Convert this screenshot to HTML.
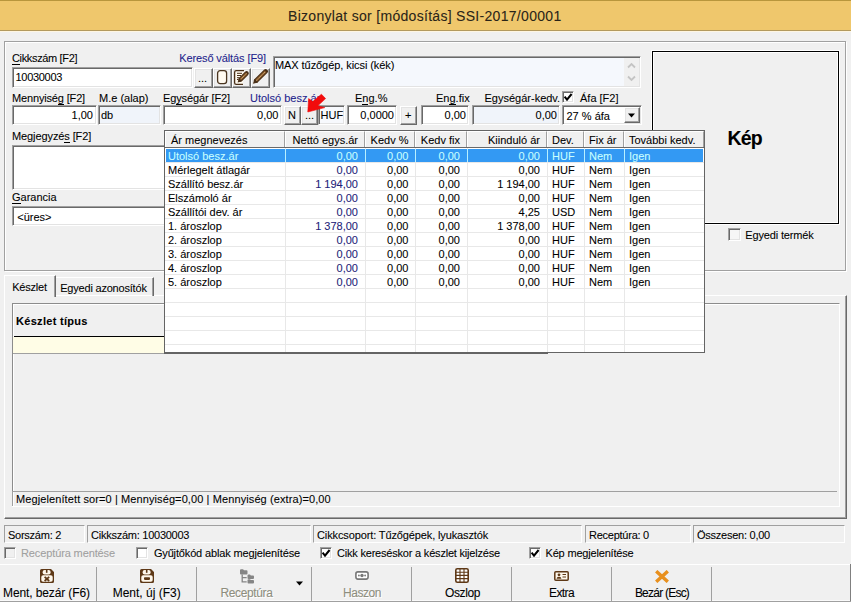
<!DOCTYPE html><html><head><meta charset="utf-8"><style>
*{margin:0;padding:0;box-sizing:border-box}
html,body{width:851px;height:602px;overflow:hidden;background:#f0f0f0;position:relative;font-family:"Liberation Sans",sans-serif}
.t{position:absolute;font:11px/13px "Liberation Sans",sans-serif;white-space:nowrap;color:#000;-webkit-text-stroke:0.08px currentColor}
.nv{color:#1e1e8c}
.b{position:absolute}
.sk{position:absolute;background:#fff;border:1px solid;border-color:#a0a0a0 #fff #fff #a0a0a0;box-shadow:inset 1px 1px 0 #696969,inset -1px -1px 0 #e3e3e3}
.rb{position:absolute;background:#f0f0f0;border:1px solid;border-color:#fff #696969 #696969 #fff;box-shadow:inset -1px -1px 0 #a0a0a0,inset 1px 1px 0 #e3e3e3}
.et{position:absolute;border:1px solid #a0a0a0;box-shadow:1px 1px 0 #fff,inset 1px 1px 0 #fff}
.cb{position:absolute;width:12px;height:12px;background:#fff;border:1px solid;border-color:#a0a0a0 #fff #fff #a0a0a0;box-shadow:inset 1px 1px 0 #696969,inset -1px -1px 0 #e3e3e3}
u{text-decoration:none;border-bottom:1px solid currentColor;display:inline-block;line-height:11px}
</style></head><body>
<div class="b" style="left:0;top:0;width:851px;height:31px;background:#efc76c;border-top:1px solid #b8963c;border-bottom:1px solid #b39a5e"></div>
<div class="b" style="left:0;top:31px;width:851px;height:1px;background:#fff6e2"></div>
<div class="t " style="top:6.65px;left:288px;font-size:14px;line-height:18px;color:#2a2418;letter-spacing:0.3px">Bizonylat sor [módosítás] SSI-2017/00001</div>
<div class="et" style="left:4px;top:41px;width:842px;height:230px;"></div>
<div class="t " style="top:51.69px;left:12px;letter-spacing:-0.35px"><u>C</u>ikkszám [F2]</div>
<div class="t nv" style="top:51.69px;right:585px;letter-spacing:-0.1px">Kereső váltás [F9]</div>
<div class="sk" style="left:12px;top:67px;width:181px;height:21px;"></div>
<div class="t " style="top:70.69px;left:15.5px;letter-spacing:-0.3px">10030003</div>
<div class="rb" style="left:194px;top:68px;width:19px;height:20px;"></div>
<div class="rb" style="left:213px;top:68px;width:19px;height:20px;"></div>
<div class="rb" style="left:232px;top:68px;width:19px;height:20px;"></div>
<div class="rb" style="left:251px;top:68px;width:19px;height:20px;"></div>
<div class="t " style="top:71.69px;left:198px;">...</div>
<svg class="b" style="left:213px;top:68px" width="19" height="20" viewBox="0 0 19 20">
<rect x="4.6" y="2.6" width="9" height="13" rx="2.6" fill="#fffaf0" stroke="#4a3520" stroke-width="1.3"/></svg>
<svg class="b" style="left:232px;top:68px" width="19" height="20" viewBox="0 0 19 20">
<path d="M12 2.6H4.2a1.6 1.6 0 0 0-1.6 1.6v10.6a1.6 1.6 0 0 0 1.6 1.6H11" fill="#fffaf0" stroke="#4a3018" stroke-width="1.3"/>
<path d="M5 5.3h5M5 7.5h4M5 9.7h2.5M5 11.5h1" stroke="#4a3018" stroke-width="1"/>
<path d="M8.6 11.4L14.6 5.4" stroke="#4a3018" stroke-width="4.4" stroke-linecap="round"/>
<path d="M8.6 11.4L14.6 5.4" stroke="#8a5a2a" stroke-width="2.2"/>
<path d="M8.8 11.2L14.4 5.6" stroke="#f0d8a8" stroke-width="0.9" stroke-dasharray="0.9 0.9"/>
<path d="M5.6 14.6L6.6 10.6L9.6 13.6z" fill="#4a3018"/></svg>
<svg class="b" style="left:251px;top:68px" width="19" height="20" viewBox="0 0 19 20">
<path d="M5.2 12.6L14.6 3.4" stroke="#4a3018" stroke-width="4.6" stroke-linecap="round"/>
<path d="M5.2 12.6L14.6 3.4" stroke="#8a5a2a" stroke-width="2.4"/>
<path d="M5.4 12.4L14.4 3.6" stroke="#f0d8a8" stroke-width="0.9" stroke-dasharray="0.9 0.9"/>
<path d="M2 15.8L3.4 11L7 14.4z" fill="#4a3018"/></svg>
<div class="sk" style="left:273px;top:56px;width:368px;height:32px;background:#f5f8fd"></div>
<div class="b" style="left:624px;top:58px;width:15px;height:28px;background:#f0f0f0"></div>
<svg class="b" style="left:624px;top:58px" width="15" height="28" viewBox="0 0 15 28">
<path d="M4 9.5l3.5-3.5L11 9.5M4 18.5l3.5 3.5L11 18.5" fill="none" stroke="#c4c4c4" stroke-width="1.8"/></svg>
<div class="t " style="top:59.19px;left:275px;letter-spacing:-0.07px">MAX tűzőgép, kicsi (kék)</div>
<div class="b" style="left:651px;top:50px;width:189px;height:175px;border:1px solid #fff"><div style="width:100%;height:100%;border:1px solid #000;box-shadow:inset 1px 1px 0 #fff,inset -1px -1px 0 #fff"></div></div>
<div class="t " style="top:127.24px;left:727.5px;font-size:19.5px;line-height:22px;letter-spacing:-0.9px"><b>Kép</b></div>
<div class="t " style="top:92.09px;left:12px;letter-spacing:-0.16px">Mennyisé<u>g</u> [F2]</div>
<div class="t " style="top:92.09px;left:99px;">M.e (alap)</div>
<div class="t " style="top:92.09px;left:163px;letter-spacing:-0.12px">Eg<u>y</u>ségár [F2]</div>
<div class="t nv" style="top:92.09px;left:250px;">Utolsó besz.ár</div>
<div class="t " style="top:92.09px;left:355px;">E<u>n</u>g.%</div>
<div class="t " style="top:92.09px;left:436px;">En<u>g</u>.fix</div>
<div class="t " style="top:92.09px;left:484.5px;">Egységár-kedv.</div>
<div class="cb" style="left:562px;top:91px;width:12px;height:12px"></div>
<svg class="b" style="left:562px;top:91px" width="12" height="12" viewBox="0 0 12 12"><path d="M2.6 5.6l2.4 3 4.6-5.6" fill="none" stroke="#000" stroke-width="2"/></svg>
<div class="t " style="top:92.09px;left:580px;">Áfa [F2]</div>
<div class="sk" style="left:12px;top:105px;width:85px;height:20px;"></div>
<div class="t " style="top:108.69px;right:758px;">1,00</div>
<div class="sk" style="left:98px;top:105px;width:63px;height:20px;background:#f0f4fa"></div>
<div class="t " style="top:108.69px;left:101px;">db</div>
<div class="sk" style="left:163px;top:105px;width:119px;height:20px;"></div>
<div class="t " style="top:108.69px;right:572.5px;">0,00</div>
<div class="rb" style="left:284px;top:106px;width:17px;height:19px;"></div>
<div class="t " style="top:108.69px;left:288px;">N</div>
<div class="rb" style="left:301px;top:106px;width:17px;height:19px;"></div>
<div class="t " style="top:109.19px;left:305px;">...</div>
<div class="sk" style="left:318px;top:105px;width:27px;height:20px;background:#f7f9fd"></div>
<div class="t " style="top:108.69px;left:320.5px;">HUF</div>
<div class="sk" style="left:347px;top:105px;width:50px;height:20px;"></div>
<div class="t " style="top:108.69px;right:457px;">0,0000</div>
<div class="rb" style="left:400px;top:106px;width:17px;height:19px;"></div>
<div class="t " style="top:108.69px;left:405px;">+</div>
<div class="sk" style="left:421px;top:105px;width:48px;height:20px;"></div>
<div class="t " style="top:108.69px;right:385px;">0,00</div>
<div class="sk" style="left:472px;top:105px;width:88px;height:20px;background:#f0f4fa"></div>
<div class="t " style="top:108.69px;right:294px;">0,00</div>
<div class="sk" style="left:562px;top:105px;width:80px;height:20px;"></div>
<div class="t " style="top:109.69px;left:566.5px;">27 % áfa</div>
<div class="rb" style="left:624px;top:107px;width:16px;height:16px;"></div>
<svg class="b" style="left:624px;top:107px" width="16" height="16" viewBox="0 0 16 16"><path d="M4 6.5h7l-3.5 4z" fill="#000"/></svg>
<svg class="b" style="left:0;top:0" width="851" height="140" viewBox="0 0 851 140"><path d="M307.8 112L308.6 98.6L312.8 101.6L321.4 94.2L325.6 98.6L317.8 105.8L324.8 107.6Z" fill="#f20c0c" stroke="#f20c0c" stroke-width="0.6" stroke-linejoin="round"/></svg>
<div class="t " style="top:130.39px;left:12px;letter-spacing:-0.1px">Megjegyzé<u>s</u> [F2]</div>
<div class="sk" style="left:12px;top:145px;width:629px;height:45px;"></div>
<div class="t " style="top:190.69px;left:12px;"><u>G</u>arancia</div>
<div class="sk" style="left:12px;top:206px;width:629px;height:20px;"></div>
<div class="t " style="top:211.19px;left:17.3px;">&lt;üres&gt;</div>
<div class="cb" style="left:728px;top:228px;width:13px;height:13px;background:#f6f6f6"></div>
<div class="t " style="top:228.69px;left:745.3px;letter-spacing:-0.15px">Egyedi termék</div>
<div class="b" style="left:4px;top:295px;width:843px;height:224px;background:#f0f0f0;border:1px solid;border-color:#fff #696969 #696969 #fff;box-shadow:inset -1px -1px 0 #a0a0a0"></div>
<div class="b" style="left:55px;top:277px;width:99px;height:19px;border-top:1px solid #fff;border-right:1px solid #696969;box-shadow:inset -1px 0 0 #a0a0a0"></div>
<div class="t " style="top:281.99px;left:60.2px;letter-spacing:-0.2px">Egyedi azonosítók</div>
<div class="b" style="left:4px;top:275px;width:52px;height:22px;background:#f0f0f0;border-top:1px solid #fff;border-left:1px solid #fff;border-right:1px solid #696969;box-shadow:inset -1px 0 0 #a0a0a0"></div>
<div class="t " style="top:280.89px;left:12.2px;letter-spacing:-0.2px">Készlet</div>
<div class="b" style="left:12px;top:303px;width:828px;height:204px;border:1px solid;border-color:#8c8c8c #fff #fff #8c8c8c;box-shadow:inset 1px 1px 0 #fff"></div>
<div class="t " style="top:315.19px;left:16px;letter-spacing:0.3px"><b>Készlet típus</b></div>
<div class="b" style="left:14px;top:336px;width:533px;height:1px;background:#000"></div>
<div class="b" style="left:13px;top:337px;width:534px;height:16px;background:#fffde6"></div>
<div class="b" style="left:13px;top:353px;width:534px;height:1px;background:#a0a0a0"></div>
<div class="b" style="left:12px;top:491px;width:825px;height:15px;border-top:1px solid #a0a0a0;border-left:1px solid #a0a0a0"></div>
<div class="b" style="left:12px;top:506px;width:827px;height:1px;background:#fff"></div>
<div class="t " style="top:493.19px;left:16px;letter-spacing:0.1px">Megjelenített sor=0 | Mennyiség=0,00 | Mennyiség (extra)=0,00</div>
<div class="b" style="left:4px;top:525px;width:81px;height:18px;border:1px solid;border-color:#a0a0a0 #fff #fff #a0a0a0"></div>
<div class="t " style="top:529.19px;left:8px;letter-spacing:-0.25px">Sorszám: 2</div>
<div class="b" style="left:87px;top:525px;width:224px;height:18px;border:1px solid;border-color:#a0a0a0 #fff #fff #a0a0a0"></div>
<div class="t " style="top:529.19px;left:91px;letter-spacing:-0.25px">Cikkszám: 10030003</div>
<div class="b" style="left:313px;top:525px;width:269px;height:18px;border:1px solid;border-color:#a0a0a0 #fff #fff #a0a0a0"></div>
<div class="t " style="top:529.19px;left:317px;letter-spacing:-0.12px">Cikkcsoport: Tűzőgépek, lyukasztók</div>
<div class="b" style="left:585px;top:525px;width:106px;height:18px;border:1px solid;border-color:#a0a0a0 #fff #fff #a0a0a0"></div>
<div class="t " style="top:529.19px;left:589px;letter-spacing:-0.25px">Receptúra: 0</div>
<div class="b" style="left:693px;top:525px;width:152px;height:18px;border:1px solid;border-color:#a0a0a0 #fff #fff #a0a0a0"></div>
<div class="t " style="top:529.19px;left:697px;letter-spacing:-0.25px">Összesen: 0,00</div>
<div class="cb" style="left:4px;top:547px;background:#f0f0f0"></div>
<div class="t " style="top:547.19px;left:21px;color:#a0a0a0;letter-spacing:-0.12px">Receptúra mentése</div>
<div class="cb" style="left:136px;top:547px"></div>
<div class="t " style="top:547.19px;left:153.9px;letter-spacing:-0.15px">Gyűjtőkód ablak megjelenítése</div>
<div class="cb" style="left:320px;top:547px"></div>
<svg class="b" style="left:320px;top:547px" width="12" height="12" viewBox="0 0 12 12"><path d="M2.6 5.6l2.4 3 4.6-5.6" fill="none" stroke="#000" stroke-width="2"/></svg>
<div class="t " style="top:547.19px;left:337px;letter-spacing:-0.2px">Cikk kereséskor a készlet kijelzése</div>
<div class="cb" style="left:529px;top:547px"></div>
<svg class="b" style="left:529px;top:547px" width="12" height="12" viewBox="0 0 12 12"><path d="M2.6 5.6l2.4 3 4.6-5.6" fill="none" stroke="#000" stroke-width="2"/></svg>
<div class="t " style="top:547.19px;left:545.5px;letter-spacing:-0.18px">Kép megjelenítése</div>
<div class="b" style="left:0;top:564px;width:851px;height:1px;background:#fff"></div>
<div class="b" style="left:850px;top:564px;width:1px;height:38px;background:#808080"></div>
<div class="b" style="left:0;top:600px;width:850px;height:1px;background:#fafafa"></div>
<div class="b" style="left:0;top:601px;width:851px;height:1px;background:#a0a0a0"></div>
<div class="b" style="left:96px;top:567px;width:1px;height:34px;background:#a0a0a0"></div>
<div class="b" style="left:196px;top:567px;width:1px;height:34px;background:#a0a0a0"></div>
<div class="b" style="left:311px;top:567px;width:1px;height:34px;background:#a0a0a0"></div>
<div class="b" style="left:411px;top:567px;width:1px;height:34px;background:#a0a0a0"></div>
<div class="b" style="left:511px;top:567px;width:1px;height:34px;background:#a0a0a0"></div>
<div class="b" style="left:611px;top:567px;width:1px;height:34px;background:#a0a0a0"></div>
<div class="b" style="left:711px;top:567px;width:1px;height:34px;background:#a0a0a0"></div>
<div class="t" style="left:-13.5px;width:120px;text-align:center;top:585.8px;font-size:12px;line-height:14px;letter-spacing:-0.12px;">Ment, bezár (F6)</div>
<div class="t" style="left:86.69999999999999px;width:120px;text-align:center;top:585.8px;font-size:12px;line-height:14px;letter-spacing:0px;">Ment, új (F3)</div>
<div class="t" style="left:186.5px;width:120px;text-align:center;top:585.8px;font-size:12px;line-height:14px;letter-spacing:-0.38px;color:#8e8e7e;text-shadow:1px 1px 0 #fff">Receptúra</div>
<div class="t" style="left:302px;width:120px;text-align:center;top:585.8px;font-size:12px;line-height:14px;letter-spacing:-0.45px;color:#8e8e7e;text-shadow:1px 1px 0 #fff">Haszon</div>
<div class="t" style="left:402.5px;width:120px;text-align:center;top:585.8px;font-size:12px;line-height:14px;letter-spacing:-0.4px;">Oszlop</div>
<div class="t" style="left:501.5px;width:120px;text-align:center;top:585.8px;font-size:12px;line-height:14px;letter-spacing:-0.6px;">Extra</div>
<div class="t" style="left:602px;width:120px;text-align:center;top:585.8px;font-size:12px;line-height:14px;letter-spacing:-0.77px;">Bezár (Esc)</div>
<svg class="b" style="left:40px;top:569px" width="14" height="14" viewBox="0 0 14 14">
<path d="M0 1.6A1.6 1.6 0 0 1 1.6 0h9.4l3 3v9.4a1.6 1.6 0 0 1-1.6 1.6H1.6A1.6 1.6 0 0 1 0 12.4z" fill="#5e3816"/>
<rect x="2.6" y="1" width="8" height="4.4" rx="2" fill="#fff8ec"/><rect x="5.9" y="0.8" width="1.6" height="3" fill="#5e3816"/>
<rect x="1.3" y="6.3" width="11.4" height="6.5" rx="1.8" fill="#fff8ec"/>
<path d="M4.6 7.8l4.6 4.2M9.2 7.8l-4.6 4.2" stroke="#5e3816" stroke-width="1.7"/></svg>
<svg class="b" style="left:140px;top:569px" width="14" height="14" viewBox="0 0 14 14">
<path d="M0 1.6A1.6 1.6 0 0 1 1.6 0h9.4l3 3v9.4a1.6 1.6 0 0 1-1.6 1.6H1.6A1.6 1.6 0 0 1 0 12.4z" fill="#5e3816"/>
<rect x="2.6" y="1" width="8" height="4.4" rx="2" fill="#fff8ec"/><rect x="5.9" y="0.8" width="1.6" height="3" fill="#5e3816"/>
<rect x="1.3" y="6.3" width="11.4" height="6.5" rx="1.8" fill="#fff8ec"/>
<rect x="4" y="8.3" width="6" height="2.6" rx="0.8" fill="#5e3816"/></svg>
<svg class="b" style="left:239px;top:568px" width="16" height="16" viewBox="0 0 16 16">
<path d="M1 2.2a1 1 0 0 1 1-1h2l1 1h2.5a1 1 0 0 1 1 1v2.3a1 1 0 0 1-1 1H2a1 1 0 0 1-1-1z" fill="#858585"/>
<path d="M3.2 6.5v7.3h4.5M3.2 9.6h4.5" stroke="#858585" stroke-width="1.3" fill="none"/>
<path d="M8.5 7.6a1 1 0 0 1 1-1h1.5l.8.8h2.2a1 1 0 0 1 1 1v1.6a1 1 0 0 1-1 1H9.5a1 1 0 0 1-1-1z" fill="#858585"/>
<path d="M8.5 12.2a1 1 0 0 1 1-1h1.5l.8.8h2.2a1 1 0 0 1 1 1v1.6a1 1 0 0 1-1 1H9.5a1 1 0 0 1-1-1z" fill="#858585"/></svg>
<svg class="b" style="left:295px;top:580px" width="9" height="7" viewBox="0 0 9 7"><path d="M1 1.5h7l-3.5 4z" fill="#000"/></svg>
<svg class="b" style="left:355px;top:571px" width="14" height="9" viewBox="0 0 14 9">
<rect x="0.9" y="0.9" width="12.2" height="7.2" rx="2" fill="#fff" stroke="#777" stroke-width="1.6"/><circle cx="7" cy="4.5" r="1.7" fill="#777"/><circle cx="3.9" cy="4.5" r="0.9" fill="#777"/><circle cx="10.1" cy="4.5" r="0.9" fill="#777"/></svg>
<svg class="b" style="left:455px;top:568px" width="14" height="15" viewBox="0 0 14 15">
<rect x="0.8" y="0.8" width="12.4" height="13.4" rx="1.5" fill="#fff" stroke="#5e3816" stroke-width="1.6"/>
<path d="M1 4.2h12M1 7.4h12M1 10.6h12M5 1v13M9 1v13" stroke="#5e3816" stroke-width="1.1"/></svg>
<svg class="b" style="left:554px;top:571px" width="15" height="10" viewBox="0 0 15 10">
<rect x="0.8" y="0.8" width="13.4" height="8.4" rx="1" fill="#fff8ec" stroke="#5e3816" stroke-width="1.5"/>
<circle cx="5" cy="3.8" r="1.4" fill="#5e3816"/><path d="M2.6 7.8a2.4 2 0 0 1 4.8 0z" fill="#5e3816"/>
<path d="M8.5 3.5h3.5M8.5 6h3.5" stroke="#5e3816" stroke-width="1.1"/></svg>
<svg class="b" style="left:654px;top:570px" width="16" height="13" viewBox="0 0 16 13">
<path d="M2.2 1.2l11.6 10.6M13.8 1.2L2.2 11.8" stroke="#e8901e" stroke-width="3.4"/></svg>
<div class="b" style="left:164px;top:130px;width:541px;height:223px;background:#fff;border:1px solid #646464"></div>
<div class="b" style="left:165px;top:131px;width:539px;height:17px;background:#f0f0f0;border-bottom:1px solid #696969"></div>
<div class="b" style="left:165px;top:131px;width:120px;height:16px;border-top:1px solid #fff;border-left:1px solid #fff;border-right:1px solid #a0a0a0;box-shadow:1px 0 0 #696969"></div>
<div class="b" style="left:285px;top:131px;width:80px;height:16px;border-top:1px solid #fff;border-left:1px solid #fff;border-right:1px solid #a0a0a0;box-shadow:1px 0 0 #696969"></div>
<div class="b" style="left:365px;top:131px;width:50px;height:16px;border-top:1px solid #fff;border-left:1px solid #fff;border-right:1px solid #a0a0a0;box-shadow:1px 0 0 #696969"></div>
<div class="b" style="left:415px;top:131px;width:52px;height:16px;border-top:1px solid #fff;border-left:1px solid #fff;border-right:1px solid #a0a0a0;box-shadow:1px 0 0 #696969"></div>
<div class="b" style="left:467px;top:131px;width:80px;height:16px;border-top:1px solid #fff;border-left:1px solid #fff;border-right:1px solid #a0a0a0;box-shadow:1px 0 0 #696969"></div>
<div class="b" style="left:547px;top:131px;width:37px;height:16px;border-top:1px solid #fff;border-left:1px solid #fff;border-right:1px solid #a0a0a0;box-shadow:1px 0 0 #696969"></div>
<div class="b" style="left:584px;top:131px;width:40px;height:16px;border-top:1px solid #fff;border-left:1px solid #fff;border-right:1px solid #a0a0a0;box-shadow:1px 0 0 #696969"></div>
<div class="b" style="left:624px;top:131px;width:80px;height:16px;border-top:1px solid #fff;border-left:1px solid #fff;border-right:1px solid #a0a0a0;box-shadow:1px 0 0 #696969"></div>
<div class="t " style="top:133.69px;left:171px;">Ár megnevezés</div>
<div class="t " style="top:133.69px;right:493px;">Nettó egys.ár</div>
<div class="t " style="top:133.69px;right:442.5px;">Kedv %</div>
<div class="t " style="top:133.69px;right:391px;">Kedv fix</div>
<div class="t " style="top:133.69px;right:311px;">Kiinduló ár</div>
<div class="t " style="top:133.69px;left:552px;">Dev.</div>
<div class="t " style="top:133.69px;left:589px;">Fix ár</div>
<div class="t " style="top:133.69px;left:629px;">További kedv.</div>
<div class="b" style="left:165px;top:162px;width:539px;height:1px;background:#e8e8e8"></div>
<div class="b" style="left:165px;top:176px;width:539px;height:1px;background:#e8e8e8"></div>
<div class="b" style="left:165px;top:190px;width:539px;height:1px;background:#e8e8e8"></div>
<div class="b" style="left:165px;top:204px;width:539px;height:1px;background:#e8e8e8"></div>
<div class="b" style="left:165px;top:218px;width:539px;height:1px;background:#e8e8e8"></div>
<div class="b" style="left:165px;top:232px;width:539px;height:1px;background:#e8e8e8"></div>
<div class="b" style="left:165px;top:246px;width:539px;height:1px;background:#e8e8e8"></div>
<div class="b" style="left:165px;top:260px;width:539px;height:1px;background:#e8e8e8"></div>
<div class="b" style="left:165px;top:274px;width:539px;height:1px;background:#e8e8e8"></div>
<div class="b" style="left:165px;top:288px;width:539px;height:1px;background:#e8e8e8"></div>
<div class="b" style="left:165px;top:302px;width:539px;height:1px;background:#e8e8e8"></div>
<div class="b" style="left:165px;top:316px;width:539px;height:1px;background:#e8e8e8"></div>
<div class="b" style="left:165px;top:330px;width:539px;height:1px;background:#e8e8e8"></div>
<div class="b" style="left:165px;top:344px;width:539px;height:1px;background:#e8e8e8"></div>
<div class="b" style="left:285px;top:148px;width:1px;height:204px;background:#e8e8e8"></div>
<div class="b" style="left:365px;top:148px;width:1px;height:204px;background:#e8e8e8"></div>
<div class="b" style="left:415px;top:148px;width:1px;height:204px;background:#e8e8e8"></div>
<div class="b" style="left:467px;top:148px;width:1px;height:204px;background:#e8e8e8"></div>
<div class="b" style="left:547px;top:148px;width:1px;height:204px;background:#e8e8e8"></div>
<div class="b" style="left:584px;top:148px;width:1px;height:204px;background:#e8e8e8"></div>
<div class="b" style="left:624px;top:148px;width:1px;height:204px;background:#e8e8e8"></div>
<div class="b" style="left:166px;top:149px;width:537px;height:13px;background:#3399f3"></div>
<div class="b" style="left:285px;top:149px;width:1px;height:13px;background:#b8f0ff"></div>
<div class="b" style="left:365px;top:149px;width:1px;height:13px;background:#b8f0ff"></div>
<div class="b" style="left:415px;top:149px;width:1px;height:13px;background:#b8f0ff"></div>
<div class="b" style="left:467px;top:149px;width:1px;height:13px;background:#b8f0ff"></div>
<div class="b" style="left:547px;top:149px;width:1px;height:13px;background:#b8f0ff"></div>
<div class="b" style="left:584px;top:149px;width:1px;height:13px;background:#b8f0ff"></div>
<div class="b" style="left:624px;top:149px;width:1px;height:13px;background:#b8f0ff"></div>
<div class="t " style="top:149.89px;left:168px;color:#c8ffff;">Utolsó besz.ár</div>
<div class="t " style="top:149.89px;right:493px;color:#c8ffff;">0,00</div>
<div class="t " style="top:149.89px;right:442.5px;color:#c8ffff;">0,00</div>
<div class="t " style="top:149.89px;right:391px;color:#c8ffff;">0,00</div>
<div class="t " style="top:149.89px;right:311px;color:#c8ffff;">0,00</div>
<div class="t " style="top:149.89px;left:552px;color:#c8ffff;">HUF</div>
<div class="t " style="top:149.89px;left:589px;color:#c8ffff;">Nem</div>
<div class="t " style="top:149.89px;left:629px;color:#c8ffff;">Igen</div>
<div class="t " style="top:163.89px;left:168px;">Mérlegelt átlagár</div>
<div class="t " style="top:163.89px;right:493px;color:#222278;">0,00</div>
<div class="t " style="top:163.89px;right:442.5px;">0,00</div>
<div class="t " style="top:163.89px;right:391px;">0,00</div>
<div class="t " style="top:163.89px;right:311px;">0,00</div>
<div class="t " style="top:163.89px;left:552px;">HUF</div>
<div class="t " style="top:163.89px;left:589px;">Nem</div>
<div class="t " style="top:163.89px;left:629px;">Igen</div>
<div class="t " style="top:177.89px;left:168px;">Szállító besz.ár</div>
<div class="t " style="top:177.89px;right:493px;color:#222278;">1 194,00</div>
<div class="t " style="top:177.89px;right:442.5px;">0,00</div>
<div class="t " style="top:177.89px;right:391px;">0,00</div>
<div class="t " style="top:177.89px;right:311px;">1 194,00</div>
<div class="t " style="top:177.89px;left:552px;">HUF</div>
<div class="t " style="top:177.89px;left:589px;">Nem</div>
<div class="t " style="top:177.89px;left:629px;">Igen</div>
<div class="t " style="top:191.89px;left:168px;">Elszámoló ár</div>
<div class="t " style="top:191.89px;right:493px;color:#222278;">0,00</div>
<div class="t " style="top:191.89px;right:442.5px;">0,00</div>
<div class="t " style="top:191.89px;right:391px;">0,00</div>
<div class="t " style="top:191.89px;right:311px;">0,00</div>
<div class="t " style="top:191.89px;left:552px;">HUF</div>
<div class="t " style="top:191.89px;left:589px;">Nem</div>
<div class="t " style="top:191.89px;left:629px;">Igen</div>
<div class="t " style="top:205.89px;left:168px;">Szállítói dev. ár</div>
<div class="t " style="top:205.89px;right:493px;color:#222278;">0,00</div>
<div class="t " style="top:205.89px;right:442.5px;">0,00</div>
<div class="t " style="top:205.89px;right:391px;">0,00</div>
<div class="t " style="top:205.89px;right:311px;">4,25</div>
<div class="t " style="top:205.89px;left:552px;">USD</div>
<div class="t " style="top:205.89px;left:589px;">Nem</div>
<div class="t " style="top:205.89px;left:629px;">Igen</div>
<div class="t " style="top:219.89px;left:168px;">1. ároszlop</div>
<div class="t " style="top:219.89px;right:493px;color:#222278;">1 378,00</div>
<div class="t " style="top:219.89px;right:442.5px;">0,00</div>
<div class="t " style="top:219.89px;right:391px;">0,00</div>
<div class="t " style="top:219.89px;right:311px;">1 378,00</div>
<div class="t " style="top:219.89px;left:552px;">HUF</div>
<div class="t " style="top:219.89px;left:589px;">Nem</div>
<div class="t " style="top:219.89px;left:629px;">Igen</div>
<div class="t " style="top:233.89px;left:168px;">2. ároszlop</div>
<div class="t " style="top:233.89px;right:493px;color:#222278;">0,00</div>
<div class="t " style="top:233.89px;right:442.5px;">0,00</div>
<div class="t " style="top:233.89px;right:391px;">0,00</div>
<div class="t " style="top:233.89px;right:311px;">0,00</div>
<div class="t " style="top:233.89px;left:552px;">HUF</div>
<div class="t " style="top:233.89px;left:589px;">Nem</div>
<div class="t " style="top:233.89px;left:629px;">Igen</div>
<div class="t " style="top:247.89px;left:168px;">3. ároszlop</div>
<div class="t " style="top:247.89px;right:493px;color:#222278;">0,00</div>
<div class="t " style="top:247.89px;right:442.5px;">0,00</div>
<div class="t " style="top:247.89px;right:391px;">0,00</div>
<div class="t " style="top:247.89px;right:311px;">0,00</div>
<div class="t " style="top:247.89px;left:552px;">HUF</div>
<div class="t " style="top:247.89px;left:589px;">Nem</div>
<div class="t " style="top:247.89px;left:629px;">Igen</div>
<div class="t " style="top:261.89px;left:168px;">4. ároszlop</div>
<div class="t " style="top:261.89px;right:493px;color:#222278;">0,00</div>
<div class="t " style="top:261.89px;right:442.5px;">0,00</div>
<div class="t " style="top:261.89px;right:391px;">0,00</div>
<div class="t " style="top:261.89px;right:311px;">0,00</div>
<div class="t " style="top:261.89px;left:552px;">HUF</div>
<div class="t " style="top:261.89px;left:589px;">Nem</div>
<div class="t " style="top:261.89px;left:629px;">Igen</div>
<div class="t " style="top:275.89px;left:168px;">5. ároszlop</div>
<div class="t " style="top:275.89px;right:493px;color:#222278;">0,00</div>
<div class="t " style="top:275.89px;right:442.5px;">0,00</div>
<div class="t " style="top:275.89px;right:391px;">0,00</div>
<div class="t " style="top:275.89px;right:311px;">0,00</div>
<div class="t " style="top:275.89px;left:552px;">HUF</div>
<div class="t " style="top:275.89px;left:589px;">Nem</div>
<div class="t " style="top:275.89px;left:629px;">Igen</div>
<div class="b" style="left:164px;top:353px;width:384px;height:1px;background:#646464"></div>
</body></html>
